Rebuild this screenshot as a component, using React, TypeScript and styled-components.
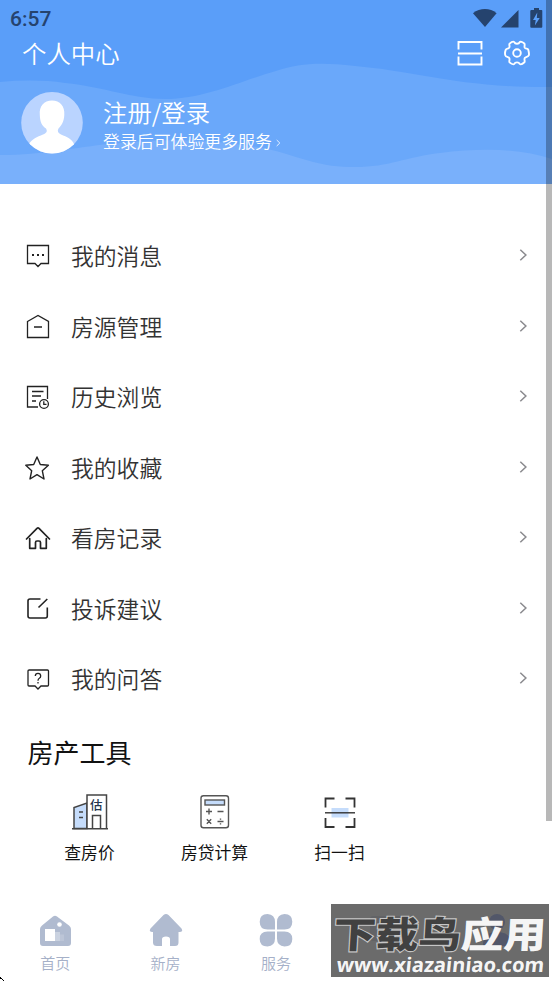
import React from "react";
import styled, { createGlobalStyle } from "styled-components";

const GlobalStyle = createGlobalStyle`
    * {
        box-sizing: border-box;
    }

    body {
        margin: 0;
        background: #fff;
        font-family: "Noto Sans CJK SC", "Noto Sans", sans-serif;
        overflow: hidden;
    }
`;

const menu = [
    { label: "我的消息", icon: <MessageIcon /> },
    { label: "房源管理", icon: <ListingIcon /> },
    { label: "历史浏览", icon: <HistoryIcon /> },
    { label: "我的收藏", icon: <StarIcon /> },
    { label: "看房记录", icon: <HouseIcon /> },
    { label: "投诉建议", icon: <EditIcon /> },
    { label: "我的问答", icon: <QuestionIcon /> },
];

const tools = [
    { label: "查房价", icon: <PriceIcon /> },
    { label: "房贷计算", icon: <CalculatorIcon /> },
    { label: "扫一扫", icon: <ScanToolIcon /> },
];

const tabs = [
    { id: "home", label: "首页", icon: <TabHomeIcon /> },
    { id: "new", label: "新房", icon: <TabNewIcon /> },
    { id: "service", label: "服务", icon: <TabServiceIcon /> },
    { id: "message", icon: <TabMessageIcon /> },
    { id: "mine", icon: <TabMineIcon />, active: true },
];

export default function App() {
    return (
        <Screen>
            <GlobalStyle />
            <Header>
                <Waves viewBox="0 0 552 184">
                    <path
                        fill="#6aa8fa"
                        d="M0 82C22 80 45 80 65 83C105 87 132 99 165 99C205 99 240 81 276 71C300 63 320 62 355 66C415 71 460 88 552 87V184H0Z"
                    />
                    <path
                        fill="#79b0fb"
                        d="M0 155C45 155 75 147 110 144C160 138 220 138 276 151C305 159 320 167 355 167C390 167 405 157 440 153C480 148 520 148 552 159V184H0Z"
                    />
                </Waves>
                <StatusBar>
                    <Clock>6:57</Clock>
                    <StatusIcons />
                </StatusBar>
                <TitleBar>
                    <Title>个人中心</Title>
                    <Actions>
                        <ScanIcon />
                        <SettingsIcon />
                    </Actions>
                </TitleBar>
                <Profile>
                    <Avatar />
                    <ProfileText>
                        <Login>注册/登录</Login>
                        <Hint>
                            登录后可体验更多服务
                            <HintArrow viewBox="0 0 5 8">
                                <path d="M.7 1L3.8 4L.7 7" />
                            </HintArrow>
                        </Hint>
                    </ProfileText>
                </Profile>
            </Header>
            <Menu>
                {menu.map((item) => (
                    <MenuRow key={item.label}>
                        {item.icon}
                        <MenuLabel>{item.label}</MenuLabel>
                        <Chevron viewBox="0 0 9 14">
                            <path d="M1.3 1.7L6.900 7L1.3 12.3" />
                        </Chevron>
                    </MenuRow>
                ))}
            </Menu>
            <ToolsTitle>房产工具</ToolsTitle>
            <Tools>
                {tools.map((tool) => (
                    <Tool key={tool.label}>
                        {tool.icon}
                        <ToolLabel>{tool.label}</ToolLabel>
                    </Tool>
                ))}
            </Tools>
            <TabBar>
                {tabs.map((tab) => (
                    <Tab key={tab.id} $active={tab.active}>
                        {tab.icon}
                        {tab.label && <span>{tab.label}</span>}
                    </Tab>
                ))}
            </TabBar>
            <ScrollThumb />
            <Watermark>
                <WatermarkName>
                    <Dark>下载鸟</Dark>
                    <span>应用</span>
                </WatermarkName>
                <WatermarkUrl>www.xiazainiao.com</WatermarkUrl>
            </Watermark>
            <Pointer viewBox="0 0 4 5">
                <path fill="#000" d="M0 1h1v1h-1zM1 2h1v1h-1zM2 3h1v1h-1zM3 4h1v1h-1zM0 2h1v1h-1z" />
            </Pointer>
        </Screen>
    );
}

function StatusIcons() {
    return (
        <svg width="72" height="22" viewBox="0 0 72 22" fill="#25436e">
            <path d="M0 5.2C7-.4 17-.4 23.6 5.2L12 19Z" />
            <path d="M28 19.500L45.500 2V19.500Z" />
            <path d="M58.5 2H61V0h5v2h2.500q.8 0 .8.800v16q0 1-1 1H58.300q-1 0-1-1V3q0-1 1.200-1Z" />
            <path fill="#5b9ff9" d="M64.300 4.500L60 12h2.700L61.900 17.500L66.700 10H63.800Z" />
        </svg>
    );
}

function ScanIcon() {
    return (
        <svg width="26" height="26" viewBox="0 0 26 26" fill="none" stroke="#fff" strokeWidth="1.9">
            <path d="M1.500 9.500V2H24.500V9.500M1.500 16.500V24.500H24.500V16.500M1 13.500H25" />
        </svg>
    );
}

function SettingsIcon() {
    return (
        <svg width="26" height="26" viewBox="0 0 26 26" fill="none" stroke="#fff" strokeWidth="1.9" strokeLinejoin="round">
            <circle cx="13" cy="13" r="3.800" />
            <path d="M10.300 2.100C11.200 4.300 14.800 4.300 15.700 2.100C16.300 1.300 18.500 2 20.300 3.500C21.300 4.500 20 6.300 20.700 7.600C21.500 9 23.700 8.300 24.200 9.600C24.700 11.500 25.400 13.800 24.800 15.300C24.200 17.200 21.700 16.500 20.700 18.100C19.900 19.600 21.300 21.300 20.400 22.300C18.800 23.800 16.600 24.700 15.700 23.900C14.800 21.800 11.200 21.800 10.300 23.900C9.400 24.700 7 23.700 5.600 22.400C4.700 21.300 6.100 19.600 5.300 18.100C4.400 16.500 2 17.200 1.400 15.500C.7 13.800 1.100 11.600 1.700 9.900C2.300 8.300 4.500 9 5.300 7.600C6.100 6.200 4.700 4.600 5.600 3.600C7.200 2.200 9.400 1.300 10.300 2.100Z" />
        </svg>
    );
}

function Avatar() {
    return (
        <svg width="62" height="62" viewBox="0 0 62 62">
            <defs>
                <clipPath id="avatar">
                    <circle cx="31" cy="30.800" r="30.800" />
                </clipPath>
            </defs>
            <g clipPath="url(#avatar)">
                <rect width="62" height="62" fill="#bad4ff" />
                <path
                    fill="#fff"
                    d="M31 8.500C39 8.500 44 14 43.300 23C43 30 40 34 37.500 36.500C36 39 37 41 40 42.500C46 45 51 47 53 52V62H8V52C11 47 16 45 22 42.500C26 41 26.500 39 25 36.500C21 34 19 30 18.800 23C18 14 23 8.500 31 8.500Z"
                />
            </g>
        </svg>
    );
}

const Line: any = styled.svg.attrs({ width: 26, height: 26, viewBox: "0 0 26 26" })`
    fill: none;
    stroke: #222;
    stroke-width: 1.300;
    flex: none;
`;

function MessageIcon() {
    return (
        <Line>
            <path d="M2.500 2.500H23.500V20.500H16L13 23.500L10 20.500H2.500Z" />
            <path strokeWidth="2" d="M7 12h2M12 12h2M17 12h2" />
        </Line>
    );
}

function ListingIcon() {
    return (
        <Line>
            <path d="M2.500 7.500L13 1.500L23.500 7.500V23.500H2.500ZM9 13H17" />
        </Line>
    );
}

function HistoryIcon() {
    return (
        <Line>
            <path d="M13 23H2.500V2.500H22.500V15M7 7.500H18.500M7 12H16M7 17H11" />
            <circle cx="19" cy="20" r="4.400" />
            <path d="M18.800 17.300V20.300H21.500" />
        </Line>
    );
}

function StarIcon() {
    return (
        <Line>
            <path strokeWidth="1.4" strokeLinejoin="round" d="M12 2L15.300 9.500L23.400 10.300L17.300 15.700L19 24L12 19.700L5 24L6.700 15.700L.8 10.300L8.700 9.500Z" />
        </Line>
    );
}

function HouseIcon() {
    return (
        <Line>
            <path
                strokeWidth="1.7"
                strokeLinecap="round"
                strokeLinejoin="round"
                d="M1.500 14L12 3.300Q13 2.400 14 3.300L24.500 14M4.700 13.500V23.300H10.500V17.500Q10.500 16 12 16H14Q15.500 16 15.500 17.500V23.300H21.300V13.500"
            />
        </Line>
    );
}

function EditIcon() {
    return (
        <Line>
            <path strokeWidth="1.6" d="M15.500 3H5Q3 3 3 5V20Q3 22 5 22H20.300Q22.300 22 22.300 20V11.500M13.500 11.500L22.300 3" />
        </Line>
    );
}

function QuestionIcon() {
    return (
        <Line>
            <path d="M3.500 4H22.500Q23.500 4 23.500 5V19Q23.500 20 22.500 20H16L13 23L10 20H4Q3 20 3 19V5Q3 4 4 4Z" />
            <path d="M10.300 10Q10.300 7.300 13 7.300Q15.700 7.300 15.700 10Q15.700 11.500 14.300 12.300Q13 13 13 14.800M13 16V17.600" />
        </Line>
    );
}

function PriceIcon() {
    return (
        <svg width="38" height="38" viewBox="0 0 38 38" fill="none" stroke="#444" strokeWidth="1.5">
            <path fill="#c5dcfb" d="M3 35.500V14.500L16 10V35.500Z" />
            <path fill="#fff" d="M16 35.500V2H35.500V35.500" />
            <path d="M21.500 35.500V22.500H29.500V35.500M1 35.700H37M8 19H12M8 24.500H12" />
            <text x="19" y="17" fontSize="12.500" fontWeight="500" fill="#24364e" stroke="none">估</text>
        </svg>
    );
}

function CalculatorIcon() {
    return (
        <svg width="38" height="38" viewBox="0 0 38 38" fill="none" stroke="#555" strokeWidth="1.4">
            <rect x="5" y="2.700" width="27.500" height="32" rx="2.500" />
            <rect x="9" y="7" width="19.500" height="5" fill="#c5dcfb" />
            <path d="M10 18.500H16M13 15.500V21.500M21.500 18.500H27.500M10.800 26.300L15.200 30.700M15.200 26.300L10.800 30.700M21.500 28.500H27.500M24.500 25.500V26.800M24.500 30.200V31.500" />
        </svg>
    );
}

function ScanToolIcon() {
    return (
        <svg width="38" height="38" viewBox="0 0 38 38" fill="none" stroke="#333" strokeWidth="1.8">
            <path fill="#c5dcfb" stroke="none" d="M10.500 15H27.500V24.500H10.500Z" />
            <path d="M4.500 14.500V5.500H13.500M24.500 5.500H33.500V14.500M4.500 25V34H13.500M24.500 34H33.500V25" />
            <path strokeWidth="1.4" d="M4 19.800H34" />
        </svg>
    );
}

function TabHomeIcon() {
    return (
        <TabIcon>
            <path d="M15 2.500Q17 .8 19 2.500L31 11.500Q33 13 33 15V29Q33 32 30 32H5Q2 32 2 29V15Q2 13 4 11.500Z" />
            <rect x="7" y="15" width="10" height="12" fill="#fff" />
            <path fill="#cad2e0" d="M17 18H22V27H17Z" />
            <path fill="#bcc5d7" d="M22 20.500H26V27H22Z" />
            <circle cx="21.500" cy="10.500" r="2.300" fill="#fff" />
        </TabIcon>
    );
}

function TabNewIcon() {
    return (
        <TabIcon>
            <path d="M14.500 1Q17 -1 19.500 1L32.500 14.500Q34.500 18 31 18H29.500V28.500Q29.500 32 26 32H21V25Q21 22.500 17 22.500Q13 22.500 13 25V32H8Q4 32 4 28.500V18H3Q-.5 18 1.500 14.500Z" />
        </TabIcon>
    );
}

function TabServiceIcon() {
    return (
        <TabIcon>
            <path d="M8.500 0Q16 .5 16 8V15.500H8.500Q.7 15.500 .7 7.700Q.7 0 8.500 0ZM25.500 0Q18 .5 18 8V15.500H25.500Q33.300 15.500 33.300 7.700Q33.300 0 25.500 0ZM8.500 32.500Q16 32 16 24.500V17.500H8.500Q.7 17.500 .7 25Q.7 32.500 8.500 32.500ZM25.500 32.500Q18 32 18 24.500V17.500H25.500Q33.300 17.500 33.300 25Q33.300 32.500 25.500 32.500Z" />
        </TabIcon>
    );
}

function TabMessageIcon() {
    return (
        <TabIcon>
            <path d="M4 2H30Q33 2 33 5V24Q33 27 30 27H20L14 32V27H4Q1 27 1 24V5Q1 2 4 2Z" />
        </TabIcon>
    );
}

function TabMineIcon() {
    return (
        <TabIcon>
            <circle cx="17" cy="8" r="8" />
            <path d="M3 32Q2 18 17 18Q32 18 31 32Z" />
        </TabIcon>
    );
}

const Screen = styled.div`
    position: relative;
    width: 552px;
    height: 981px;
    display: flex;
    flex-direction: column;
    overflow: hidden;
`;

const Header = styled.header`
    position: relative;
    height: 184px;
    flex: none;
    background: #5a9ef9;
    color: #fff;
    isolation: isolate;
`;

const Waves = styled.svg`
    position: absolute;
    inset: 0;
    z-index: -1;
`;

const StatusBar = styled.div`
    display: flex;
    justify-content: space-between;
    height: 38px;
    padding: 8px 7px 0 10px;
`;

const Clock = styled.span`
    color: #25436e;
    font: 500 21px/23px Roboto, sans-serif;
`;

const TitleBar = styled.div`
    display: flex;
    align-items: center;
    justify-content: space-between;
    height: 32px;
    padding: 0 22px 2px;
`;

const Title = styled.h1`
    margin: 0;
    font-size: 24.400px;
    line-height: 32px;
    font-weight: 350;
`;

const Actions = styled.div`
    display: flex;
    gap: 21px;
`;

const Profile = styled.div`
    display: flex;
    align-items: flex-start;
    gap: 20px;
    padding: 22px 21px 0;
`;

const ProfileText = styled.div`
    padding-top: 4px;
`;

const Login = styled.div`
    font-size: 24.400px;
    line-height: 32px;
    font-weight: 350;
`;

const Hint = styled.div`
    display: flex;
    align-items: center;
    gap: 4px;
    font-size: 16.900px;
    line-height: 26px;
    font-weight: 350;
`;

const HintArrow = styled.svg`
    width: 5px;
    height: 8px;
    margin-top: 4px;
    fill: none;
    stroke: #e4efff;
`;

const Menu = styled.nav`
    padding-top: 37.200px;
`;

const MenuRow = styled.div`
    display: flex;
    align-items: center;
    height: 70.500px;
    padding: 0 24px 0 25px;
`;

const MenuLabel = styled.span`
    flex: 1;
    padding-left: 20px;
    color: #333;
    font-size: 22.800px;
    line-height: 32px;
    font-weight: 350;
`;

const Chevron = styled.svg`
    width: 9px;
    height: 14px;
    margin-bottom: 2px;
    fill: none;
    stroke: #8a8a8e;
    stroke-width: 1.500;
`;

const ToolsTitle = styled.h2`
    margin: 19.800px 0 0 27.500px;
    color: #111;
    font-size: 26px;
    line-height: 36px;
    font-weight: 400;
`;

const Tools = styled.div`
    display: flex;
    padding: 23px 0 0 27px;
`;

const Tool = styled.div`
    display: flex;
    flex-direction: column;
    align-items: center;
    width: 125px;
`;

const ToolLabel = styled.span`
    margin-top: 9px;
    color: #111;
    font-size: 16.800px;
    line-height: 24px;
`;

const TabBar = styled.footer`
    display: flex;
    margin-top: auto;
    height: 67px;
`;

const Tab: any = styled.div`
    display: flex;
    flex-direction: column;
    align-items: center;
    gap: 4px;
    width: 110.400px;
    color: #a5b0c8;
    fill: ${(props: any) => (props.$active ? "#3058e8" : "#b0bbd0")};
    font-size: 15px;
    line-height: 24px;
    font-weight: 350;
`;

const TabIcon: any = styled.svg.attrs({ width: 34, height: 33, viewBox: "0 0 34 33" })`
    flex: none;
`;

const ScrollThumb = styled.div`
    position: absolute;
    top: 0;
    right: 0;
    width: 6px;
    height: 821px;
    background: rgba(0, 0, 0, 0.28);
`;

const Watermark = styled.div`
    position: absolute;
    left: 331px;
    top: 904px;
    width: 218px;
    height: 73px;
    background: rgba(87, 87, 87, 0.88);
    color: rgba(255, 255, 255, 0.96);
    white-space: nowrap;
`;

const WatermarkName = styled.div`
    display: flex;
    height: 48px;
    padding-left: 3px;
    font-size: 42.500px;
    line-height: 58px;
    font-weight: 900;
    transform: scaleY(0.86) skewX(-3deg);
`;

const Dark = styled.span`
    color: #414141;
    -webkit-text-stroke: 2.500px #c6c6c6;
    paint-order: stroke fill;
`;

const WatermarkUrl = styled.div`
    padding: 1px 0 0 6px;
    font: 700 20.200px/22px "Open Sans", sans-serif;
    letter-spacing: -0.050px;
    transform: skewX(-6deg);
`;

const Pointer = styled.svg`
    position: absolute;
    left: 0;
    bottom: 0;
    width: 4px;
    height: 5px;
`;
